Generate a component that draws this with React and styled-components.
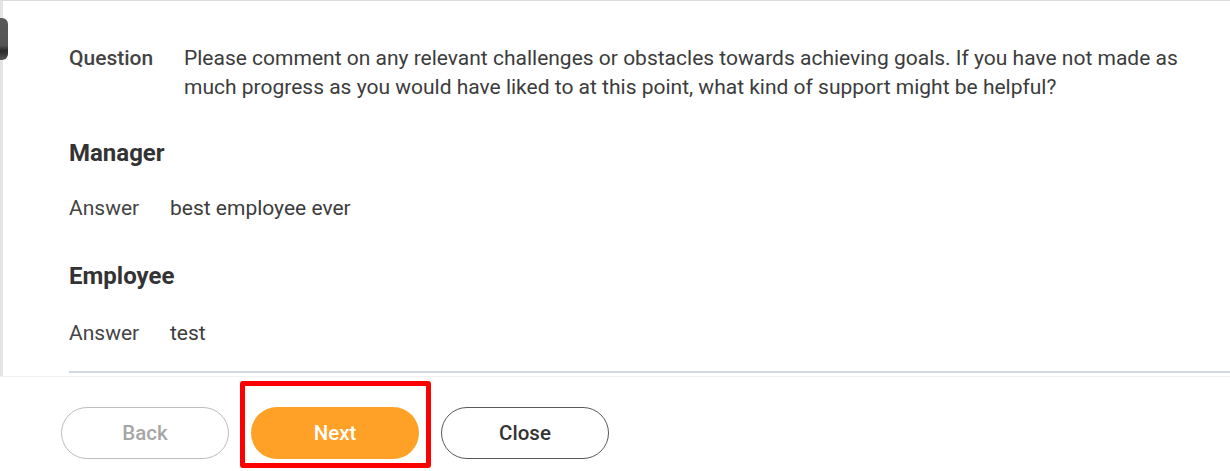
import React from 'react';
import styled, { createGlobalStyle } from 'styled-components';

const GlobalStyle = createGlobalStyle`
  html, body {
    margin: 0;
    padding: 0;
    background: #ffffff;
    font-family: Roboto, "Liberation Sans", Arial, sans-serif;
    color: #333333;
  }
`;

const Page = styled.div`
  width: 1230px;
  height: 471px;
  overflow: hidden;
  display: flex;
  flex-direction: column;
`;

const Content = styled.div`
  position: relative;
  height: 376px;
  box-sizing: border-box;
  border-top: 1px solid #dcdcdc;
  border-left: 3px solid #e4e4e4;
  padding: 43px 0 0 66px;
  display: flex;
  flex-direction: column;
`;

const SideTab = styled.div`
  position: absolute;
  left: -3px;
  top: 17px;
  width: 8px;
  height: 42px;
  border-radius: 0 6px 6px 0;
  background: linear-gradient(#5a5a5a 0%, #555 65%, #2a2a2a 78%, #555 100%);
`;

const Row = styled.div`
  display: flex;
  font-size: 21px;
  line-height: 29px;
  margin-top: ${(p) => p.top || 0}px;
`;

const Label = styled.div`
  flex: 0 0 ${(p) => p.width}px;
  color: #444;
  font-weight: ${(p) => (p.strong ? 500 : 400)};
`;

const Value = styled.div`
  flex: 1;
  padding-right: 40px;
  color: #3c3c3c;
`;

const Heading = styled.h3`
  margin: ${(p) => p.top}px 0 0 0;
  font-size: 24px;
  line-height: 30px;
  font-weight: 700;
  color: #333;
`;

const Divider = styled.div`
  margin-top: auto;
  margin-bottom: 3px;
  height: 2px;
  background: #d3d9df;
`;

const Footer = styled.div`
  flex: 1;
  border-top: 1px solid #f0f0f0;
  display: flex;
  align-items: flex-start;
  padding: 30px 0 0 61px;
`;

const Button = styled.button`
  width: 168px;
  height: 52px;
  border-radius: 26px;
  box-sizing: border-box;
  font-family: Roboto, "Liberation Sans", Arial, sans-serif;
  font-size: 20.5px;
  font-weight: 500;
  cursor: pointer;
  background: ${(p) => (p.primary ? '#ffa126' : '#ffffff')};
  color: ${(p) => (p.primary ? '#ffffff' : p.disabled ? '#a6a6a6' : '#333333')};
  border: ${(p) => (p.primary ? 'none' : `1.5px solid ${p.disabled ? '#bdbdbd' : '#5a5a5a'}`)};
`;

const Highlight = styled.div`
  margin: -26px 10px 0 11px;
  padding: 21px 7px 0 6px;
  height: 87px;
  box-sizing: border-box;
  border: 5px solid #ff0000;
  border-radius: 3px;
`;

export default function App() {
  return (
    <Page>
      <GlobalStyle />
      <Content>
        <SideTab />
        <Row>
          <Label width={115} strong>Question</Label>
          <Value>
            Please comment on any relevant challenges or obstacles towards achieving goals. If you have not made as
            much progress as you would have liked to at this point, what kind of support might be helpful?
          </Value>
        </Row>
        <Heading top={36}>Manager</Heading>
        <Row top={26}>
          <Label width={101}>Answer</Label>
          <Value>best employee ever</Value>
        </Row>
        <Heading top={38}>Employee</Heading>
        <Row top={28}>
          <Label width={101}>Answer</Label>
          <Value>test</Value>
        </Row>
        <Divider />
      </Content>
      <Footer>
        <Button disabled>Back</Button>
        <Highlight>
          <Button primary>Next</Button>
        </Highlight>
        <Button>Close</Button>
      </Footer>
    </Page>
  );
}
